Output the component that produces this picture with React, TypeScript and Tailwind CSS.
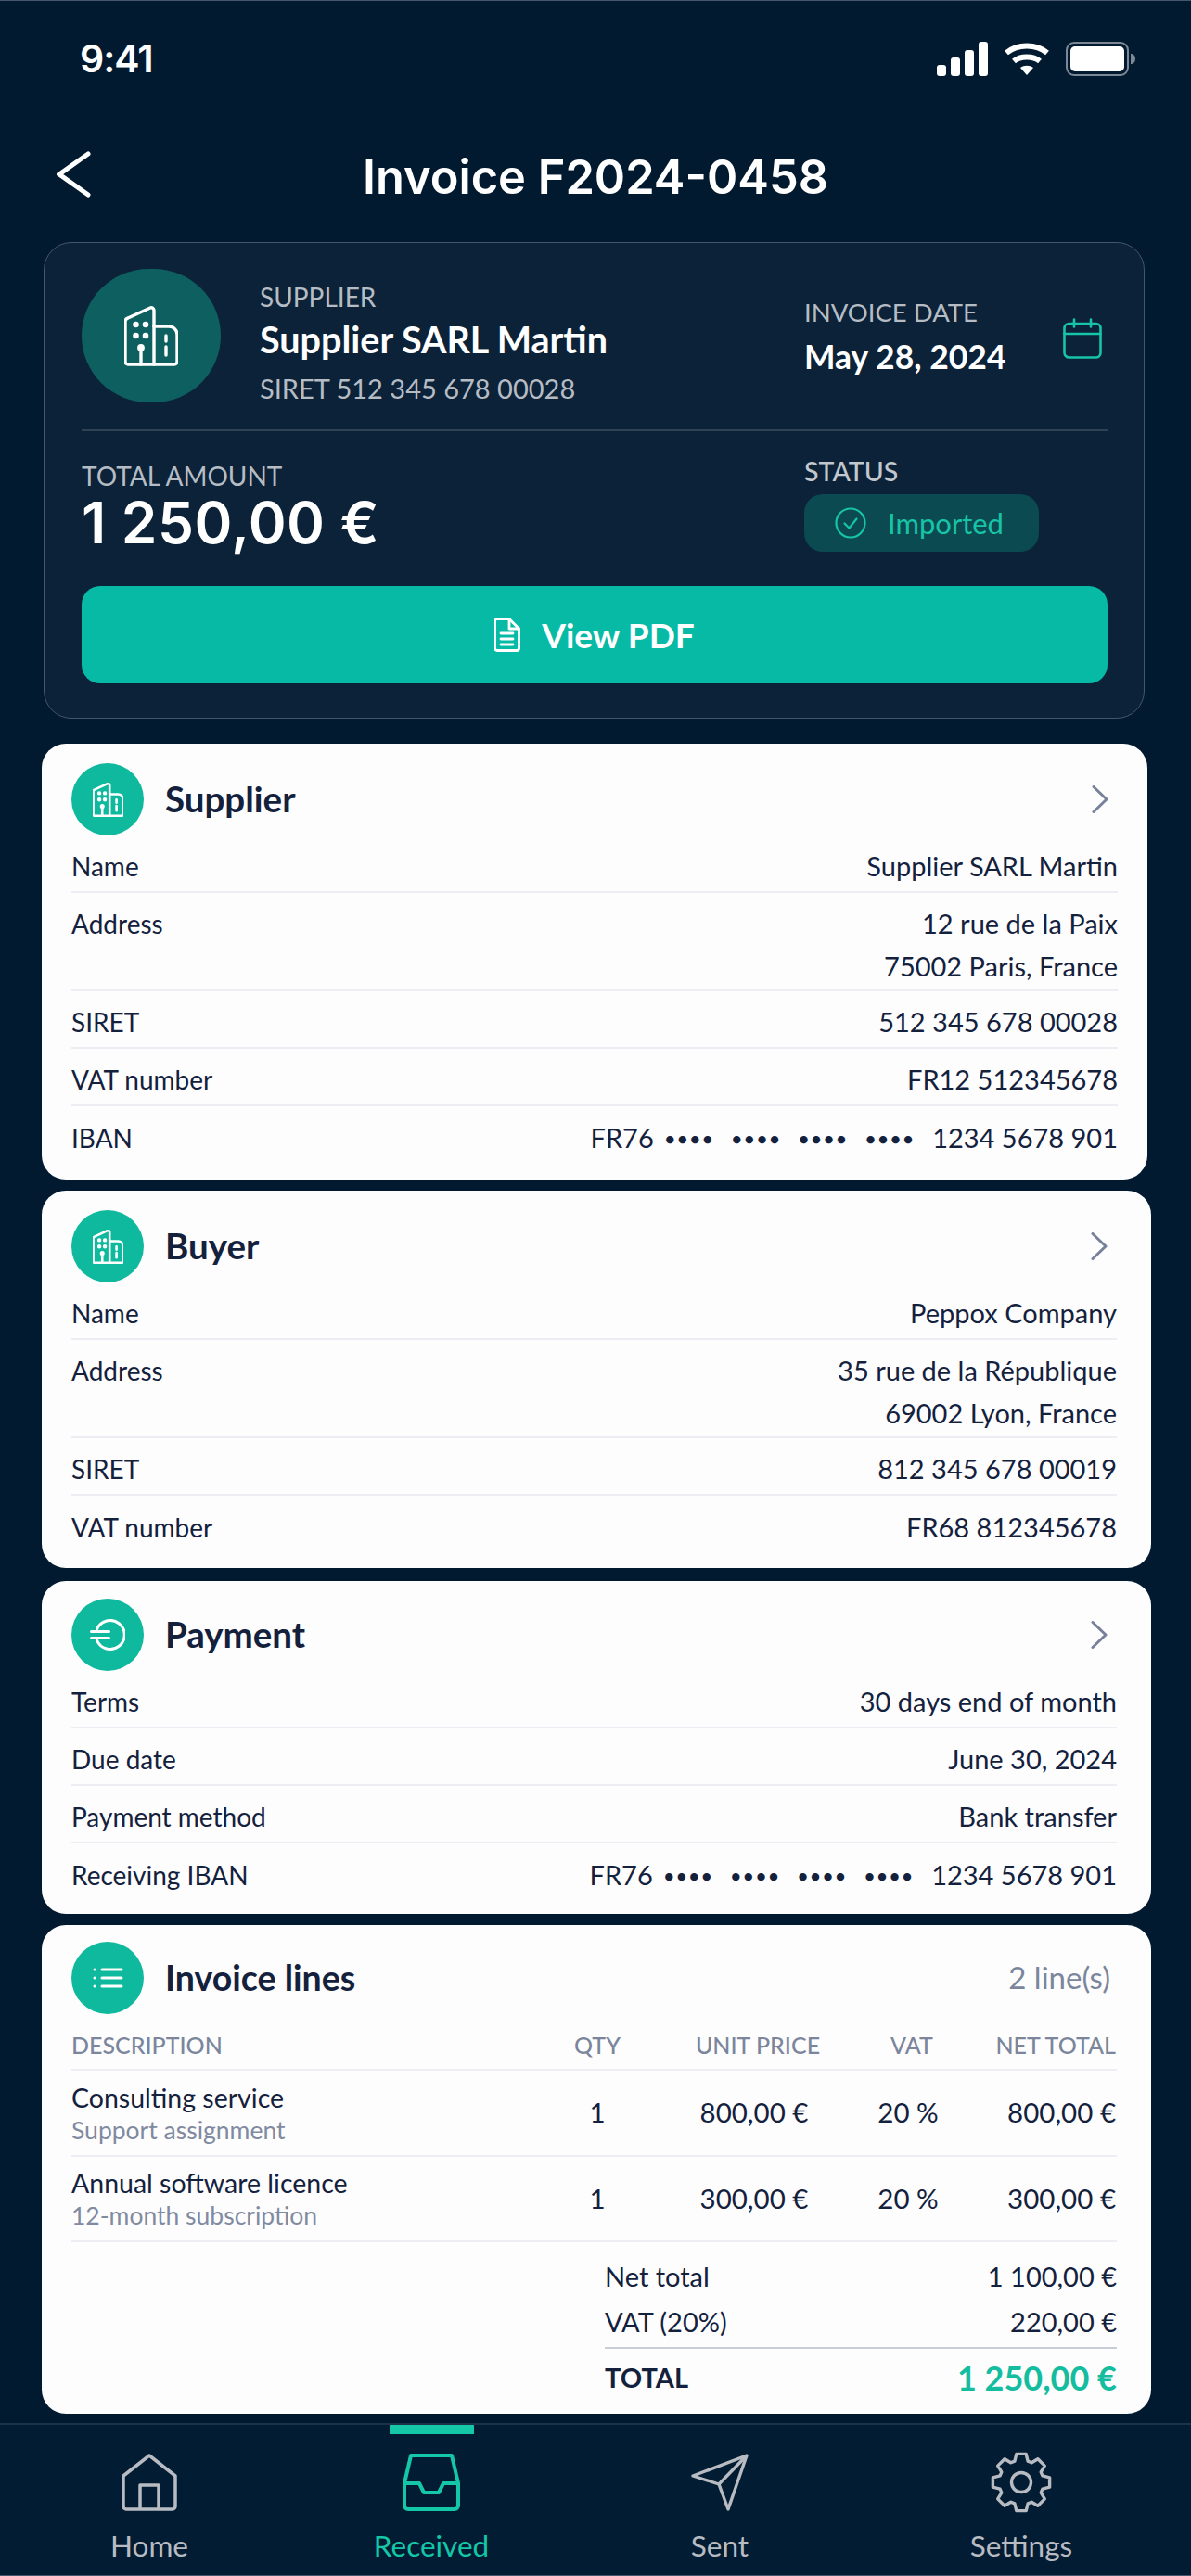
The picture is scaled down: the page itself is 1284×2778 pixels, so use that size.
const navy = "text-[#14213d]";

function BuildingIcon({ className, strokeWidth }: { className: string; strokeWidth: number }) {
  return (
    <svg viewBox="0 0 58 65" fill="none" stroke="currentColor" strokeWidth={strokeWidth} strokeLinecap="round" strokeLinejoin="round" className={className}>
      <path d="M32 63H4a3 3 0 0 1-3-3V17a4 4 0 0 1 3-4L28 2a3 3 0 0 1 4 3v58Z" />
      <path d="M32 22h16a9 9 0 0 1 9 9v29a3 3 0 0 1-3 3H32" />
      <path d="M18 63V47" />
      <circle cx="18" cy="45" r="2.2" fill="currentColor" />
      <circle cx="12.5" cy="20" r="1.6" fill="currentColor" />
      <circle cx="23" cy="20" r="1.6" fill="currentColor" />
      <circle cx="12.5" cy="32" r="1.6" fill="currentColor" />
      <circle cx="23" cy="32" r="1.6" fill="currentColor" />
      <path d="M45 32v6M45 44v9" />
    </svg>
  );
}

function EuroIcon() {
  return (
    <svg viewBox="0 0 38 34" fill="none" stroke="currentColor" strokeWidth="3" strokeLinecap="round" className="h-[34px] w-[38px] text-white">
      <path d="M7.500 11a15.500 15.500 0 1 1 0 12" />
      <path d="M1.500 13.500h19M1.500 20.500h19" />
    </svg>
  );
}

function ListIcon() {
  return (
    <svg viewBox="0 0 33 24" fill="none" stroke="currentColor" strokeWidth="3" strokeLinecap="round" className="h-[24px] w-[33px] text-white">
      <path d="M10 3h21M10 12h21M10 21h21" />
      <path d="M2 3h.1M2 12h.1M2 21h.1" />
    </svg>
  );
}

function Chevron() {
  return (
    <svg viewBox="0 0 18 30" fill="none" stroke="#77829a" strokeWidth="3" strokeLinecap="round" strokeLinejoin="round" className="h-[30px] w-[18px]">
      <path d="M2 1.500 16 15 2 28.500" />
    </svg>
  );
}

// 8 tooth cog outline, centred on 33,33
function gearPath() {
  const pts: string[] = [];
  for (let i = 0; i < 8; i++) {
    const a = (i * Math.PI) / 4 - Math.PI / 2;
    const at = (r: number, off: number) => `${(33 + r * Math.cos(a + off)).toFixed(1)} ${(33 + r * Math.sin(a + off)).toFixed(1)}`;
    pts.push(at(24, -0.3), at(31, -0.17), at(31, 0.17), at(24, 0.3));
  }
  return `M${pts.join("L")}Z`;
}

function StatusBar() {
  return (
    <div className="flex h-[124px] items-center justify-between pl-[86px] pr-[60px] pt-[1px]">
      <span className="[font-family:Inter,sans-serif] text-[41px] font-semibold leading-none tracking-[-1px] text-white">9:41</span>
      <div className="flex items-center gap-[17px]">
        <svg viewBox="0 0 55 37" fill="#fff" className="h-[37px] w-[55px]">
          <rect x="0" y="25" width="10" height="12" rx="3" />
          <rect x="15" y="17" width="10" height="20" rx="3" />
          <rect x="30" y="9" width="10" height="28" rx="3" />
          <rect x="45" y="0" width="10" height="37" rx="3" />
        </svg>
        <svg viewBox="0 0 50 36" fill="none" stroke="#fff" strokeWidth="6" className="h-[36px] w-[50px]">
          <path d="M3 11c12-10 32-10 44 0" />
          <path d="M11 20c7-6 21-6 28 0" />
          <path d="M25 35 18 27c4-3 10-3 14 0Z" fill="#fff" stroke="none" />
        </svg>
        <svg viewBox="0 0 75 37" className="h-[37px] w-[75px]">
          <rect x="1" y="1" width="66" height="35" rx="8" fill="none" stroke="#7d8896" strokeWidth="2" />
          <rect x="5" y="5" width="58" height="27" rx="5" fill="#fff" />
          <path d="M70 13c3 0 5 2 5 5.500s-2 5.500-5 5.500Z" fill="#7d8896" />
        </svg>
      </div>
    </div>
  );
}

function Hero() {
  return (
    <div className="ml-[47px] w-[1187px] rounded-[30px] border border-[#46566a] bg-[#0b2239] pl-[40px] pr-[39px] pb-[37px] pt-[28px] text-white">
      <div className="grid h-[175px] grid-cols-[779px_1fr] border-b-2 border-[#2f4155]">
        <div className="flex">
          <div className="flex h-[144px] w-[150px] items-center justify-center rounded-full bg-[#0e5f60]">
            <BuildingIcon className="h-[65px] w-[58px] text-white" strokeWidth={3.4} />
          </div>
          <div className="ml-[42px] pt-[13px]">
            <div className="text-[28px] leading-[34px] text-[#b6bcc4]">SUPPLIER</div>
            <div className="text-[39.500px] font-bold leading-[58px]">Supplier SARL Martin</div>
            <div className="mt-[6px] text-[29px] leading-[36px] text-[#b6bcc4]">SIRET 512 345 678 00028</div>
          </div>
        </div>
        <div className="flex justify-between pr-[6px]">
          <div className="pt-[30px]">
            <div className="text-[27.500px] leading-[34px] text-[#b6bcc4]">INVOICE DATE</div>
            <div className="mt-[8px] text-[35.500px] font-bold leading-[46px]">May 28, 2024</div>
          </div>
          <svg viewBox="0 0 42 44" fill="none" stroke="#17c4a6" strokeWidth="2.600" strokeLinecap="round" className="mt-[53px] h-[44px] w-[42px]">
            <rect x="1.500" y="6" width="39" height="36.500" rx="5" />
            <path d="M1.500 17h39M12 1.500v8M30 1.500v8" />
          </svg>
        </div>
      </div>
      <div className="grid h-[167px] grid-cols-[779px_1fr]">
        <div className="pt-[31px]">
          <div className="text-[28px] leading-[34px] text-[#b6bcc4]">TOTAL AMOUNT</div>
          <div className="[font-family:Inter,sans-serif] text-[62px] font-semibold leading-[68px] tracking-[0.5px]">1 250,00 €</div>
        </div>
        <div className="pt-[26px]">
          <div className="text-[28.500px] font-medium leading-[34px] text-[#c3c8ce]">STATUS</div>
          <div className="mt-[8px] flex h-[62px] w-[253px] items-center rounded-[20px] bg-[#0c4a51] pl-[33px] text-[#17c4a6]">
            <svg viewBox="0 0 34 34" fill="none" stroke="currentColor" strokeWidth="2.200" strokeLinecap="round" strokeLinejoin="round" className="h-[34px] w-[34px]">
              <circle cx="17" cy="17" r="15.500" />
              <path d="m10.500 17.500 5 5 8-10" />
            </svg>
            <span className="ml-[23px] text-[31px] leading-none">Imported</span>
          </div>
        </div>
      </div>
      <div className="flex h-[105px] items-center justify-center gap-[23px] rounded-[20px] bg-[#06baa5]">
        <svg viewBox="0 0 28 37" fill="none" stroke="#fff" strokeWidth="2.800" strokeLinejoin="round" strokeLinecap="round" className="h-[37px] w-[28px]">
          <path d="M3 1.500h13l10.500 10.500v21a2.500 2.500 0 0 1-2.500 2.500H3A2.500 2.500 0 0 1 .5 33V4A2.500 2.500 0 0 1 3 1.500Z" />
          <path d="M16 1.500V12h10.500M7 17h13M7 23h13M7 29h13" />
        </svg>
        <span className="text-[37px] font-bold leading-none text-white">View PDF</span>
      </div>
    </div>
  );
}

function Value({ text }: { text: string }) {
  // masked IBAN groups have smaller dots and wider gaps than the font's bullet
  if (!text.includes("•")) return <div>{text}</div>;
  const parts = text.split(" ");
  return (
    <div className="flex items-center justify-end">
      <span className="mr-[12px]">{parts[0]}</span>
      {parts.slice(1, 5).map((dots, i) => (
        <span key={i} className="mr-[18px] text-[19px] font-bold leading-none tracking-[2.500px]">{dots}</span>
      ))}
      <span>{parts.slice(5).join(" ")}</span>
    </div>
  );
}

function Row({ label, lines, last }: { label: string; lines: string[]; last?: boolean }) {
  const double = lines.length > 1;
  return (
    <div className={`flex justify-between ${navy} ${last ? "" : "border-b-2 border-[#eceef3]"} ${double ? "h-[106px] pt-[10px] leading-[46px]" : "h-[62px] items-center pt-[6px]"}`}>
      <span className="text-[28px]">{label}</span>
      <div className="text-right text-[29px]">
        {lines.map((l) => (
          <Value key={l} text={l} />
        ))}
      </div>
    </div>
  );
}

function Card({ title, icon, rows, className }: { title: string; icon: React.ReactNode; rows: [string, string[]][]; className: string }) {
  return (
    <div className={`rounded-[26px] bg-[#fdfdfe] pl-[32px] ${className}`}>
      <div className="flex h-[78px] items-center">
        <div className="flex h-[78px] w-[78px] items-center justify-center rounded-full bg-[#0fb99d]">{icon}</div>
        <span className={`ml-[23px] flex-1 text-[38.500px] font-bold ${navy}`}>{title}</span>
        <Chevron />
        <span className="w-[10px]" />
      </div>
      {rows.map(([label, lines], i) => (
        <Row key={label} label={label} lines={lines} last={i === rows.length - 1} />
      ))}
    </div>
  );
}

const lineItems = [
  { name: "Consulting service", sub: "Support assignment", price: "800,00 €", h: "h-[93px]" },
  { name: "Annual software licence", sub: "12-month subscription", price: "300,00 €", h: "h-[92px]" },
];

function InvoiceLines() {
  return (
    <div className="mt-[12px] ml-[45px] w-[1196px] rounded-[26px] bg-[#fdfdfe] pb-[8px] pl-[32px] pr-[37px] pt-[18px]">
      <div className="flex h-[78px] items-center">
        <div className="flex h-[78px] w-[78px] items-center justify-center rounded-full bg-[#0fb99d]"><ListIcon /></div>
        <span className={`ml-[23px] flex-1 text-[37.500px] font-bold ${navy}`}>Invoice lines</span>
        <span className="pr-[7px] text-[33px] text-[#7b869c]">2 line(s)</span>
      </div>
      <div className="grid h-[61px] grid-cols-[522px_90px_256px_76px_182px] items-center border-b-2 border-[#eceef3] pt-[9px] text-center text-[25px] font-medium text-[#7b869c]">
        <span className="text-left">DESCRIPTION</span>
        <span>QTY</span>
        <span>UNIT PRICE</span>
        <span>VAT</span>
        <span className="text-right">NET TOTAL</span>
      </div>
      {lineItems.map((item) => (
        <div key={item.name} className={`grid ${item.h} grid-cols-[522px_90px_256px_76px_182px] items-center border-b-2 border-[#eceef3] text-center text-[29.500px] ${navy}`}>
          <div className="text-left">
            <div className="text-[28.500px] leading-[36px]">{item.name}</div>
            <div className="text-[26.500px] leading-[34px] text-[#808aa0]">{item.sub}</div>
          </div>
          <span>1</span>
          <span className="pr-[8px]">{item.price}</span>
          <span className="pr-[8px]">20 %</span>
          <span className="text-right">{item.price}</span>
        </div>
      ))}
      <div className={`ml-[575px] text-[29px] ${navy}`}>
        <div className="flex h-[74px] items-center justify-between"><span>Net total</span><span>1 100,00 €</span></div>
        <div className="flex h-[41px] justify-between border-b-2 border-[#c9cdd8] leading-[24px]"><span>VAT (20%)</span><span>220,00 €</span></div>
        <div className="flex h-[62px] items-center justify-between">
          <span className="font-bold">TOTAL</span>
          <span className="text-[36px] font-bold text-[#14bd9f]">1 250,00 €</span>
        </div>
      </div>
    </div>
  );
}

function NavTab({ label, active, children }: { label: string; active?: boolean; children: React.ReactNode }) {
  return (
    <div className={`flex flex-col items-center ${active ? "text-[#14c7a7]" : "text-[#b8bcc2]"}`}>
      <div className={`h-[10px] w-[91px] ${active ? "bg-[#14c7a7]" : ""}`} />
      <div className="mt-[19px] flex h-[66px] items-center">{children}</div>
      <span className="mt-[16px] text-[31.500px] leading-[38px]">{label}</span>
    </div>
  );
}

function BottomNav() {
  return (
    <div className="mt-auto grid h-[164px] grid-cols-[322px_286px_336px_314px] border-t-2 border-[#1c3247] bg-[#021c33]">
      <NavTab label="Home">
        <svg viewBox="0 0 60 62" fill="none" stroke="currentColor" strokeWidth="3.500" strokeLinejoin="round" className="h-[62px] w-[60px]">
          <path d="M2 24 30 2l28 22v33a3 3 0 0 1-3 3H5a3 3 0 0 1-3-3Z" />
          <path d="M20 60V34h20v26" />
        </svg>
      </NavTab>
      <NavTab label="Received" active>
        <svg viewBox="0 0 62 62" fill="none" stroke="currentColor" strokeWidth="4" strokeLinejoin="round" className="h-[62px] w-[62px]">
          <path d="M9 2h44l7 30v24a4 4 0 0 1-4 4H6a4 4 0 0 1-4-4V32Z" />
          <path d="M2 32h16l5 10h16l5-10h16" />
        </svg>
      </NavTab>
      <NavTab label="Sent">
        <svg viewBox="0 0 62 62" fill="none" stroke="currentColor" strokeWidth="3.400" strokeLinejoin="round" className="h-[62px] w-[62px]">
          <path d="M60 2 2 24l28 9 10 27Z" />
          <path d="M60 2 30 33" />
        </svg>
      </NavTab>
      <NavTab label="Settings">
        <svg viewBox="0 0 66 66" fill="none" stroke="currentColor" strokeWidth="3.400" strokeLinejoin="round" className="h-[66px] w-[66px]">
          <path d={gearPath()} />
          <circle cx="33" cy="33" r="10.500" />
        </svg>
      </NavTab>
    </div>
  );
}

export default function App() {
  return (
    <div className="flex h-[2778px] w-[1284px] flex-col overflow-hidden border-y border-[#46566a] bg-[#021a30] [font-family:Lato,sans-serif]">
      <StatusBar />
      <div className="relative flex h-[136px] items-center justify-center pb-[4px]">
        <svg viewBox="0 0 38 50" fill="none" stroke="#fff" strokeWidth="5" strokeLinecap="round" className="absolute left-[61px] top-[38px] h-[50px] w-[38px]">
          <path d="M34 3 3 25l31 22" />
        </svg>
        <h1 className="[font-family:Inter,sans-serif] text-[50.500px] font-semibold leading-none text-white">Invoice F2024-0458</h1>
      </div>
      <Hero />
      <Card
        title="Supplier"
        icon={<BuildingIcon className="h-[37px] w-[33px] text-white" strokeWidth={4.6} />}
        className="mt-[27px] ml-[45px] w-[1192px] pb-[17px] pr-[32px] pt-[21px]"
        rows={[
          ["Name", ["Supplier SARL Martin"]],
          ["Address", ["12 rue de la Paix", "75002 Paris, France"]],
          ["SIRET", ["512 345 678 00028"]],
          ["VAT number", ["FR12 512345678"]],
          ["IBAN", ["FR76 •••• •••• •••• •••• 1234 5678 901"]],
        ]}
      />
      <Card
        title="Buyer"
        icon={<BuildingIcon className="h-[37px] w-[33px] text-white" strokeWidth={4.6} />}
        className="mt-[12px] ml-[45px] w-[1196px] pb-[16px] pr-[37px] pt-[21px]"
        rows={[
          ["Name", ["Peppox Company"]],
          ["Address", ["35 rue de la République", "69002 Lyon, France"]],
          ["SIRET", ["812 345 678 00019"]],
          ["VAT number", ["FR68 812345678"]],
        ]}
      />
      <Card
        title="Payment"
        icon={<EuroIcon />}
        className="mt-[14px] ml-[45px] w-[1196px] pb-[14px] pr-[37px] pt-[19px]"
        rows={[
          ["Terms", ["30 days end of month"]],
          ["Due date", ["June 30, 2024"]],
          ["Payment method", ["Bank transfer"]],
          ["Receiving IBAN", ["FR76 •••• •••• •••• •••• 1234 5678 901"]],
        ]}
      />
      <InvoiceLines />
      <BottomNav />
    </div>
  );
}
